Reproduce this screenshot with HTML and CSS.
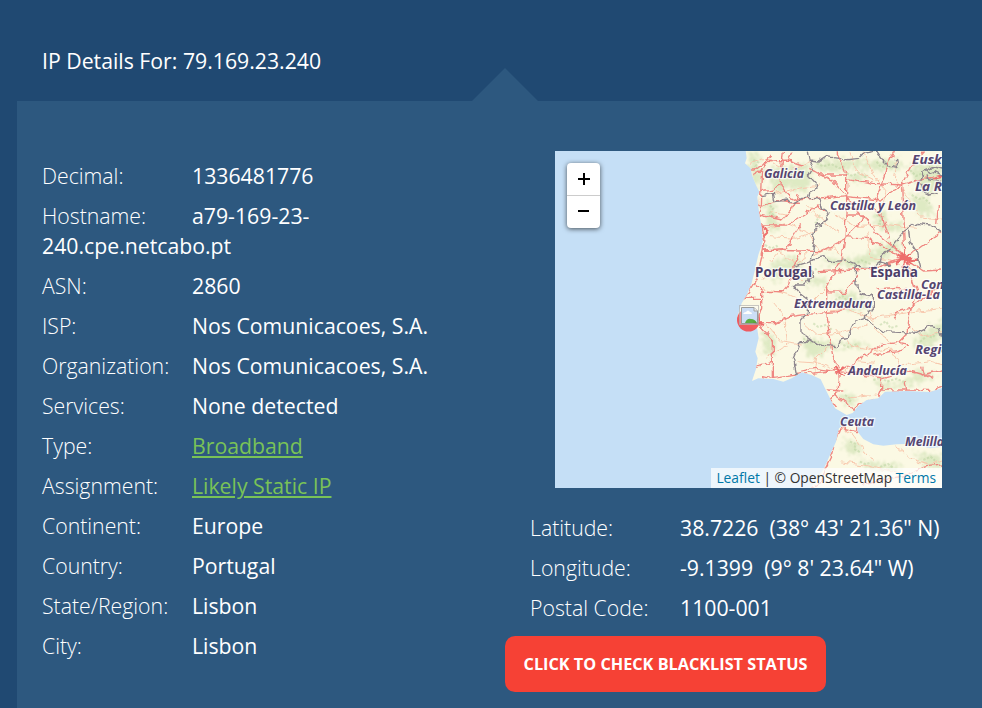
FILE: index.html
```html
<!DOCTYPE html>
<html lang="en">
<head>
<meta charset="utf-8">
<title>IP Details</title>
<link rel="stylesheet" href="styles.css">
</head>
<body>
<h1 class="title">IP Details For: 79.169.23.240</h1>
<main class="panel">
  <section class="details">
    <p><span class="label">Decimal:</span><span class="value">1336481776</span></p>
    <p><span class="label">Hostname:</span><span class="value">a79-169-23-<wbr>240.cpe.netcabo.pt</span></p>
    <p><span class="label">ASN:</span><span class="value">2860</span></p>
    <p><span class="label">ISP:</span><span class="value">Nos Comunicacoes, S.A.</span></p>
    <p><span class="label">Organization:</span><span class="value">Nos Comunicacoes, S.A.</span></p>
    <p><span class="label">Services:</span><span class="value">None detected</span></p>
    <p><span class="label">Type:</span><a class="link" href="#">Broadband</a></p>
    <p><span class="label">Assignment:</span><a class="link" href="#">Likely Static IP</a></p>
    <p><span class="label">Continent:</span><span class="value">Europe</span></p>
    <p><span class="label">Country:</span><span class="value">Portugal</span></p>
    <p><span class="label">State/Region:</span><span class="value">Lisbon</span></p>
    <p><span class="label">City:</span><span class="value">Lisbon</span></p>
  </section>
  <section class="location">
    <div class="map">
      <svg class="tiles" viewBox="555 151 387 337" width="387" height="337">
        <defs>
          <filter id="soft" x="0" y="0" width="1" height="1"><feTurbulence type="fractalNoise" baseFrequency=".1" numOctaves="3" seed="4"/><feDisplacementMap in="SourceGraphic" scale="60" xChannelSelector="R" yChannelSelector="G"/><feGaussianBlur stdDeviation="2.500"/></filter>
          <filter id="winding" filterUnits="userSpaceOnUse" x="0" y="0" width="660" height="1040"><feTurbulence type="fractalNoise" baseFrequency=".045" numOctaves="2" seed="9" result="n"/><feDisplacementMap in="SourceGraphic" in2="n" scale="20" xChannelSelector="R" yChannelSelector="G"/></filter>
          <path id="land" d="M45 0L50 40L45 55L62 70L66 90L78 120L88 140L82 155L85 185L90 220L96 250L98 290L85 330L78 360L75 375L65 415L50 450L35 475L22 515L38 536L60 545L82 552L86 580L76 620L83 640L78 672L66 708L85 700L130 702L160 710L185 700L215 682L245 690L272 703L285 730L300 760L315 790L350 810L368 804L385 783L410 765L445 760L465 740L530 738L600 741L640 728V0ZM345 838L327 850L318 890L300 930L282 970L255 1010L235 1040H640V905L600 910L560 900L540 890L525 897L500 898L460 902L430 898L400 882L383 860L381 840L370 834L360 843Z"/>
          <clipPath id="coast"><use href="#land"/></clipPath>
        </defs>
        <rect x="555" y="151" width="387" height="337" fill="#c5dff6"/>
        <g transform="translate(730 145) scale(.33333)">
          <use href="#land" fill="#fbf9e4"/>
          <g clip-path="url(#coast)">
            <g class="woods" filter="url(#soft)">
              <path d="M50 20L90 30L80 65L100 80L90 130L70 120ZM120 70L170 65L230 55L245 110L220 150L180 120L150 150L120 130ZM250 50L320 45L420 50L500 40L520 70L450 75L390 65L330 80L260 75ZM540 60L640 50V120L600 150L560 130ZM100 170L140 180L130 220L155 245L120 260ZM430 200L470 205L465 240L520 230L510 260L450 255ZM350 90L410 82L400 105L360 110ZM530 150L590 155L610 210L570 210Z"/>
              <path d="M280 335L350 345L420 325L490 285L520 300L460 345L380 365L290 360ZM130 350L190 335L220 360L180 390L140 410L110 390ZM210 395L280 400L300 415L230 422ZM310 445L370 440L420 490L390 500L340 485ZM560 580L640 520V570L600 610L550 600ZM100 560L140 580L130 630L100 620ZM220 580L330 595L420 590L400 610L310 605L250 640L230 625ZM330 745L380 755L370 785L340 770ZM420 700L500 720L570 675L620 690L540 720L460 735ZM340 880L390 900L400 930L350 920ZM380 945L440 955L520 960L490 980L410 970ZM550 925L640 930V970L590 965Z"/>
            </g>
            <path class="texture" d="M70 45l15 7l-8 12l20 10M130 85l15-8l18 13l18-5l16 15M260 55l20 9l24-7l24 13l15-6M350 85l18 8l16-10l24 14M440 50l13 17l22-6l11 12M540 75l18 18l19-8l20 21l23-7M545 150l22 12l15-3l18 17M110 175l20 15l-10 14l22 12M440 210l15 8l-8 18l22 7M270 210l-13 22l18 13M105 300l20 10l15-7l14 17M350 350l20 9l25-13l27 11M255 370l12 13l23-4M315 465l22-13l16 19l24-5M450 540l18-11l13 20l25-7M250 535l15 11l25-7l15 15M220 580l17 13l30-3M340 600l17 7l25-10M570 590l22-18l15 6l20-23M430 705l25-8l15 13l30-9l22 10M345 750l18 12l-6 13M360 890l18 7l-6 15l19 10M390 950l17 8l14-5M450 966l24-9l18 13M580 945l22-10l13 12"/>
            <g filter="url(#winding)">
            <path class="minor" d="M60 55L105 40L170 80L240 50M115 150L205 130L270 120M110 250L170 235L230 260L270 320M120 200L165 210L190 190M360 25L380 80L430 105M400 20L430 90L470 140L455 190M320 210L370 245L480 240L560 250M500 45L490 100L540 170L580 220L636 225M230 180L290 240L330 265M250 330L310 305L350 350M120 350L145 320L200 360L235 320M410 260L420 340L500 350M95 400L150 375L220 410M100 430L180 450L240 480L290 430M220 535L260 570L330 565L410 540M110 540L150 590L215 600M125 470L160 510L170 600L110 640M295 500L350 490L420 520L550 500L636 490M300 600L260 640L250 690M320 555L360 600L430 615M420 500L440 560L500 600M540 550L590 575L636 560M430 620L480 610L510 660L600 650L636 660M345 680L380 650L430 655M200 650L270 655L325 680M350 760L440 750M335 850L370 870L430 950M330 950L400 960L540 990M500 905L540 940L600 960L636 945M120 275L200 280L260 255"/>
            <path class="road" d="M45 75L75 75L95 60L125 30M70 90L95 75L110 50L175 45L220 60M95 70L92 150L90 230L102 270L100 315L80 400L68 420L40 465M95 140L130 135L150 118L170 145L198 165L350 152M150 118L160 20M175 45L190 20M85 185L150 165L210 175M90 210L155 225L180 200L205 150M90 240L170 240L265 180L285 200M100 315L170 310L190 270L215 235M100 315L210 318L270 320L340 285L350 275M240 75L275 90L310 110L350 155L345 280L335 350M320 20L350 90L350 155M350 90L270 90L235 70M350 100L430 115L515 120L545 65L580 20M515 120L450 165L350 155M515 120L520 240L525 340M350 155L390 210L405 215L350 275M345 210L405 210L440 265L520 330M350 275L410 280L470 310L520 340M490 20L465 85L430 190L460 220L475 280M636 95L580 100L515 120M525 340L580 300L636 260M525 340L580 378L636 375M525 340L490 300M525 340L480 355M525 340L430 370L370 375L265 380M525 340L560 440L540 500L530 570L510 590M70 415L100 440L160 440L180 415L190 360L210 325M95 435L95 490L80 535L110 565L130 590L130 645L80 665M45 460L90 460M80 533L140 533L180 515L230 508L320 500L350 490M330 350L290 425L290 500L300 590L310 640L328 675M290 440L345 442L385 390M440 435L500 430L540 435M490 520L500 500L540 490L620 430M328 680L425 620L450 600L500 590L540 600L505 620L430 630M328 680L420 690L455 700L530 675L580 690L636 675M328 680L250 670L200 682M90 695L130 700L240 685L325 675M130 700L130 645M328 680L325 730L300 765L320 790M315 750L350 775L370 800L385 780L445 760L455 735L530 735L600 736L636 725M455 735L455 700M530 735L525 705M345 845L328 852L315 890L305 930L285 970L270 1015L240 1025M340 850L380 860L380 840M290 735L340 738M300 760L330 735M636 960L590 965L530 990L480 1000L400 1020M610 700L580 685L575 665M620 240L625 180"/>
            <path class="city" d="M500 325L550 355M525 320L520 365M505 350L545 325M510 330L540 360M525 345L500 355M530 345L565 340M500 340L548 338M515 322L535 362M95 245L115 260L100 275M313 666L340 693M318 690L344 665M70 530L100 540M610 98L636 91"/>
            <path class="border" d="M235 20L240 45L265 48L290 32L330 38L345 45L385 40L400 25L440 18L455 40L475 62L500 68L508 50L495 40M240 45L248 65L235 90L255 112L258 130L240 145L235 160L215 160L195 175L180 165L135 170L130 145L92 152M235 160L270 162L278 190L302 205L285 230L260 245L245 270L255 300L248 330L240 350L190 365M240 350L248 395L225 420L190 420L215 450L235 465L235 500L210 530L210 560L240 580M240 345L280 335L310 350L350 345L375 355L378 420L400 450L415 455M448 360L455 335L480 310L525 255L560 235L600 240L636 260M535 250L540 290L560 320L565 350L570 370M375 365L430 365L448 350L480 360M415 455L430 450L430 490L415 500L405 520L375 530L360 560L355 580L330 585L320 605L270 600L240 580L230 590L210 590L190 640L200 690M405 520L460 560L560 565L600 545L625 550L636 580M575 80L580 95L565 110L575 120L580 140L600 150L620 145M580 80L610 65L636 72M590 90L595 100L636 110M585 75L600 85L615 80L636 90"/>
            </g>
          </g>
        </g>
        <g class="places">
          <text x="764" y="178" textLength="40" lengthAdjust="spacingAndGlyphs">Galicia</text>
          <text x="912" y="164" textLength="38" lengthAdjust="spacingAndGlyphs">Euska</text>
          <text x="915" y="191" textLength="31" lengthAdjust="spacingAndGlyphs">La Ri</text>
          <text x="830" y="209.500" textLength="86" lengthAdjust="spacingAndGlyphs">Castilla y León</text>
          <text class="country" x="755" y="277" textLength="57" lengthAdjust="spacingAndGlyphs">Portugal</text>
          <text class="country" x="870" y="277" textLength="48" lengthAdjust="spacingAndGlyphs">España</text>
          <text x="921" y="289" textLength="27" lengthAdjust="spacingAndGlyphs">Com</text>
          <text x="877" y="299" textLength="63" lengthAdjust="spacingAndGlyphs">Castilla-La</text>
          <text x="794" y="308" textLength="78" lengthAdjust="spacingAndGlyphs">Extremadura</text>
          <text x="915" y="354" textLength="34" lengthAdjust="spacingAndGlyphs">Regió</text>
          <text x="848" y="374.500" textLength="59" lengthAdjust="spacingAndGlyphs">Andalucía</text>
          <text x="840" y="426" textLength="34" lengthAdjust="spacingAndGlyphs">Ceuta</text>
          <text x="905" y="446" textLength="39" lengthAdjust="spacingAndGlyphs">Melilla</text>
        </g>
        <g class="marker">
          <circle cx="748.500" cy="320" r="11.500" fill="#f34c50"/>
          <rect x="739.500" y="305.500" width="19" height="19" fill="#fff" fill-opacity=".35" stroke="#aaa" stroke-opacity=".7"/>
          <path d="M741.500 307.500H754L757.500 311V323.500H741.500Z" fill="#c8dcf8" stroke="#929292"/>
          <path d="M754 307.500V311H757.500" fill="#eee" stroke="#999"/>
          <path d="M743 314q1-2 3-2q2-3 4 0q2 0 2 2Z" fill="#fff"/>
          <path d="M745 323q2-5 6-4q4 0 6 4Z" fill="#4aa634"/>
        </g>
      </svg>
      <div class="zoom">
        <button type="button" aria-label="Zoom in"><svg width="14" height="14"><path d="M1 7H13M7 1V13"/></svg></button>
        <button type="button" aria-label="Zoom out"><svg width="14" height="14"><path d="M1 6H12"/></svg></button>
      </div>
      <div class="credit"><a href="#">Leaflet</a> | © OpenStreetMap <a href="#">Terms</a></div>
    </div>
    <div class="coords">
      <p><span class="label">Latitude:</span><span class="value">38.7226&nbsp; (38° 43' 21.36" N)</span></p>
      <p><span class="label">Longitude:</span><span class="value">-9.1399&nbsp; (9° 8' 23.64" W)</span></p>
      <p><span class="label">Postal Code:</span><span class="value">1100-001</span></p>
    </div>
    <a class="check" href="#">CLICK TO CHECK BLACKLIST STATUS</a>
  </section>
</main>
</body>
</html>
```
FILE: styles.css
```css
* { box-sizing: border-box; }
body {
  margin: 0;
  height: 708px;
  overflow: hidden;
  background: #204972;
  color: #fff;
  font-family: "Open Sans", sans-serif;
  font-size: 21.25px;
  line-height: 30px;
}
.title {
  margin: 0;
  padding: 46px 0 0 42px;
  height: 101px;
  font-size: 21.25px;
  font-weight: 400;
  line-height: 30px;
}
.panel {
  position: relative;
  display: flex;
  height: 607px;
  margin-left: 17px;
  padding: 50px 0 0 25px;
  background: #2d587f;
}
.panel::before {
  content: "";
  position: absolute;
  left: 455px;
  top: -33px;
  border: solid transparent;
  border-width: 0 33px 33px;
  border-bottom-color: #2d587f;
}
.details { width: 463px; padding: 10px 60px 0 0; }
p { margin: 0 0 10px; white-space: nowrap; }
.details p { white-space: normal; }
.label { display: inline-block; width: 150px; font-weight: 300; }
.value { font-weight: 500; }
.link { color: #79c257; text-decoration: underline; }
.location { width: 477px; }
.map {
  position: relative;
  width: 387px;
  height: 337px;
  margin-left: 50px;
  overflow: hidden;
}
.tiles { display: block; }
.woods { fill: #d5e4b9; opacity: .75; }
.texture { fill: none; stroke: #b8d29d; stroke-width: 6; opacity: .5; stroke-dasharray: 7 5; }
.minor { fill: none; stroke: #f8c8ae; stroke-width: 3; stroke-linejoin: round; }
.road { fill: none; stroke: #ef8781; stroke-width: 4; stroke-linejoin: round; }
.city { fill: none; stroke: #ed6e6c; stroke-width: 6; }
.border { fill: none; stroke: #8d858d; stroke-width: 4; stroke-linejoin: round; }
.places text {
  fill: #554570;
  stroke: #fff;
  stroke-opacity: .7;
  stroke-width: 2.500px;
  paint-order: stroke;
  font-size: 12.5px;
  font-weight: 700;
  font-style: italic;
}
.places .country { font-size: 13.5px; font-style: normal; fill: #4c3d68; }
.marker { opacity: .9; }
.zoom {
  position: absolute;
  left: 12px;
  top: 12px;
  width: 33px;
  border-radius: 4px;
  background: #fff;
  box-shadow: 0 1px 5px rgba(0, 0, 0, .65);
}
.zoom button {
  display: grid;
  place-items: center;
  width: 33px;
  height: 32px;
  padding: 0 0 0 1px;
  border: 0;
  background: none;
}
.zoom button:first-child { height: 33px; border-bottom: 1px solid #ccc; }
.zoom path { stroke: #000; stroke-width: 2; }
.credit {
  position: absolute;
  right: 0;
  bottom: 0;
  height: 20px;
  padding: 0 6px 0 5px;
  background: rgba(255, 255, 255, .7);
  color: #333;
  font-size: 13.8px;
  line-height: 20px;
  white-space: nowrap;
}
.credit a { color: #0078a8; text-decoration: none; }
.coords { padding: 25px 0 0 25px; }
.check {
  display: flex;
  align-items: center;
  justify-content: center;
  width: 321px;
  height: 56px;
  margin-top: 13px;
  border-radius: 10px;
  background: #f64135;
  color: #fff;
  font-size: 16.25px;
  font-weight: 700;
  text-decoration: none;
  white-space: nowrap;
}
```
